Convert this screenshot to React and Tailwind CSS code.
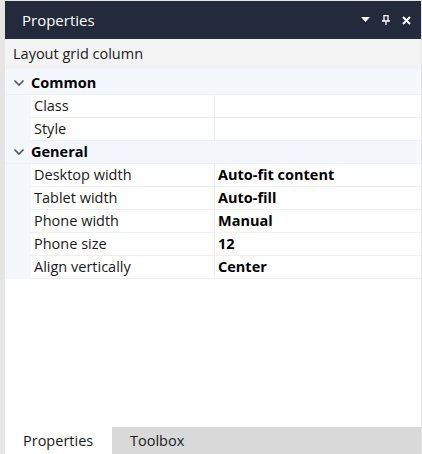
import React from "react";

const font = { fontFamily: '"Segoe UI", "Open Sans", "Liberation Sans", sans-serif' };

const Chevron = () => (
  <svg width="12" height="8" viewBox="0 0 12 8" className="text-[#555]">
    <path d="M1.5 1.5 L6 6 L10.5 1.5" fill="none" stroke="currentColor" strokeWidth="1.6" />
  </svg>
);

const Category = ({ name }) => (
  <div className="flex items-center h-[23px] border-b border-[#edf0f4]">
    <div className="w-[26px] flex justify-center pl-[2px]">
      <Chevron />
    </div>
    <span className="font-bold text-[14.5px] text-black">{name}</span>
  </div>
);

const Row = ({ label, value }) => (
  <div className="flex h-[23px] bg-white border-b border-[#f0f0f0] ml-[26px]">
    <div className="w-[184px] border-r border-[#f0f0f0] pl-[3px] flex items-center text-[14.5px] text-[#1a1a1a]">
      {label}
    </div>
    <div className="flex-1 pl-[3px] flex items-center text-[14.5px] font-bold text-black">{value}</div>
  </div>
);

export default function App() {
  return (
    <div
      className="w-[422px] h-[454px] bg-[#e5e5e5] pl-[5px] pr-[1px] pt-[1px] flex flex-col"
      style={font}
    >
      {/* Title bar */}
      <div className="h-[38px] bg-[#222a3b] flex items-center pl-[17px] pr-[10px] shrink-0">
        <span className="text-white text-[15px] flex-1">Properties</span>
        <div className="flex items-center gap-[12px]">
          <svg width="9" height="6" viewBox="0 0 9 6">
            <path d="M0 0 H9 L4.5 5 Z" fill="#fff" />
          </svg>
          <svg width="8" height="10" viewBox="0 0 8 10">
            <path d="M2 0.5 H6 V6 H2 Z M0 6 H8 M4 6 V10" fill="none" stroke="#fff" strokeWidth="1.3" />
          </svg>
          <svg width="9" height="9" viewBox="0 0 9 9">
            <path d="M1 1 L8 8 M8 1 L1 8" stroke="#fff" strokeWidth="2" />
          </svg>
        </div>
      </div>

      {/* Selected element */}
      <div className="h-[30px] bg-[#f3f3f3] flex items-center pl-[8px] text-[14.5px] text-[#1a1a1a] shrink-0">
        Layout grid column
      </div>

      {/* Grid */}
      <div className="flex-1 bg-white flex flex-col">
        <div className="bg-[#f4f7fb] pt-[3px]">
          <Category name="Common" />
          <Row label="Class" value="" />
          <Row label="Style" value="" />
          <Category name="General" />
          <Row label="Desktop width" value="Auto-fit content" />
          <Row label="Tablet width" value="Auto-fill" />
          <Row label="Phone width" value="Manual" />
          <Row label="Phone size" value="12" />
          <Row label="Align vertically" value="Center" />
        </div>
      </div>

      {/* Tabs */}
      <div className="h-[27px] bg-[#d9d9d9] flex text-[14.5px] text-[#1a1a1a] shrink-0">
        <div className="w-[107px] bg-white flex items-center pl-[18px]">Properties</div>
        <div className="flex items-center pl-[18px]">Toolbox</div>
      </div>
    </div>
  );
}
